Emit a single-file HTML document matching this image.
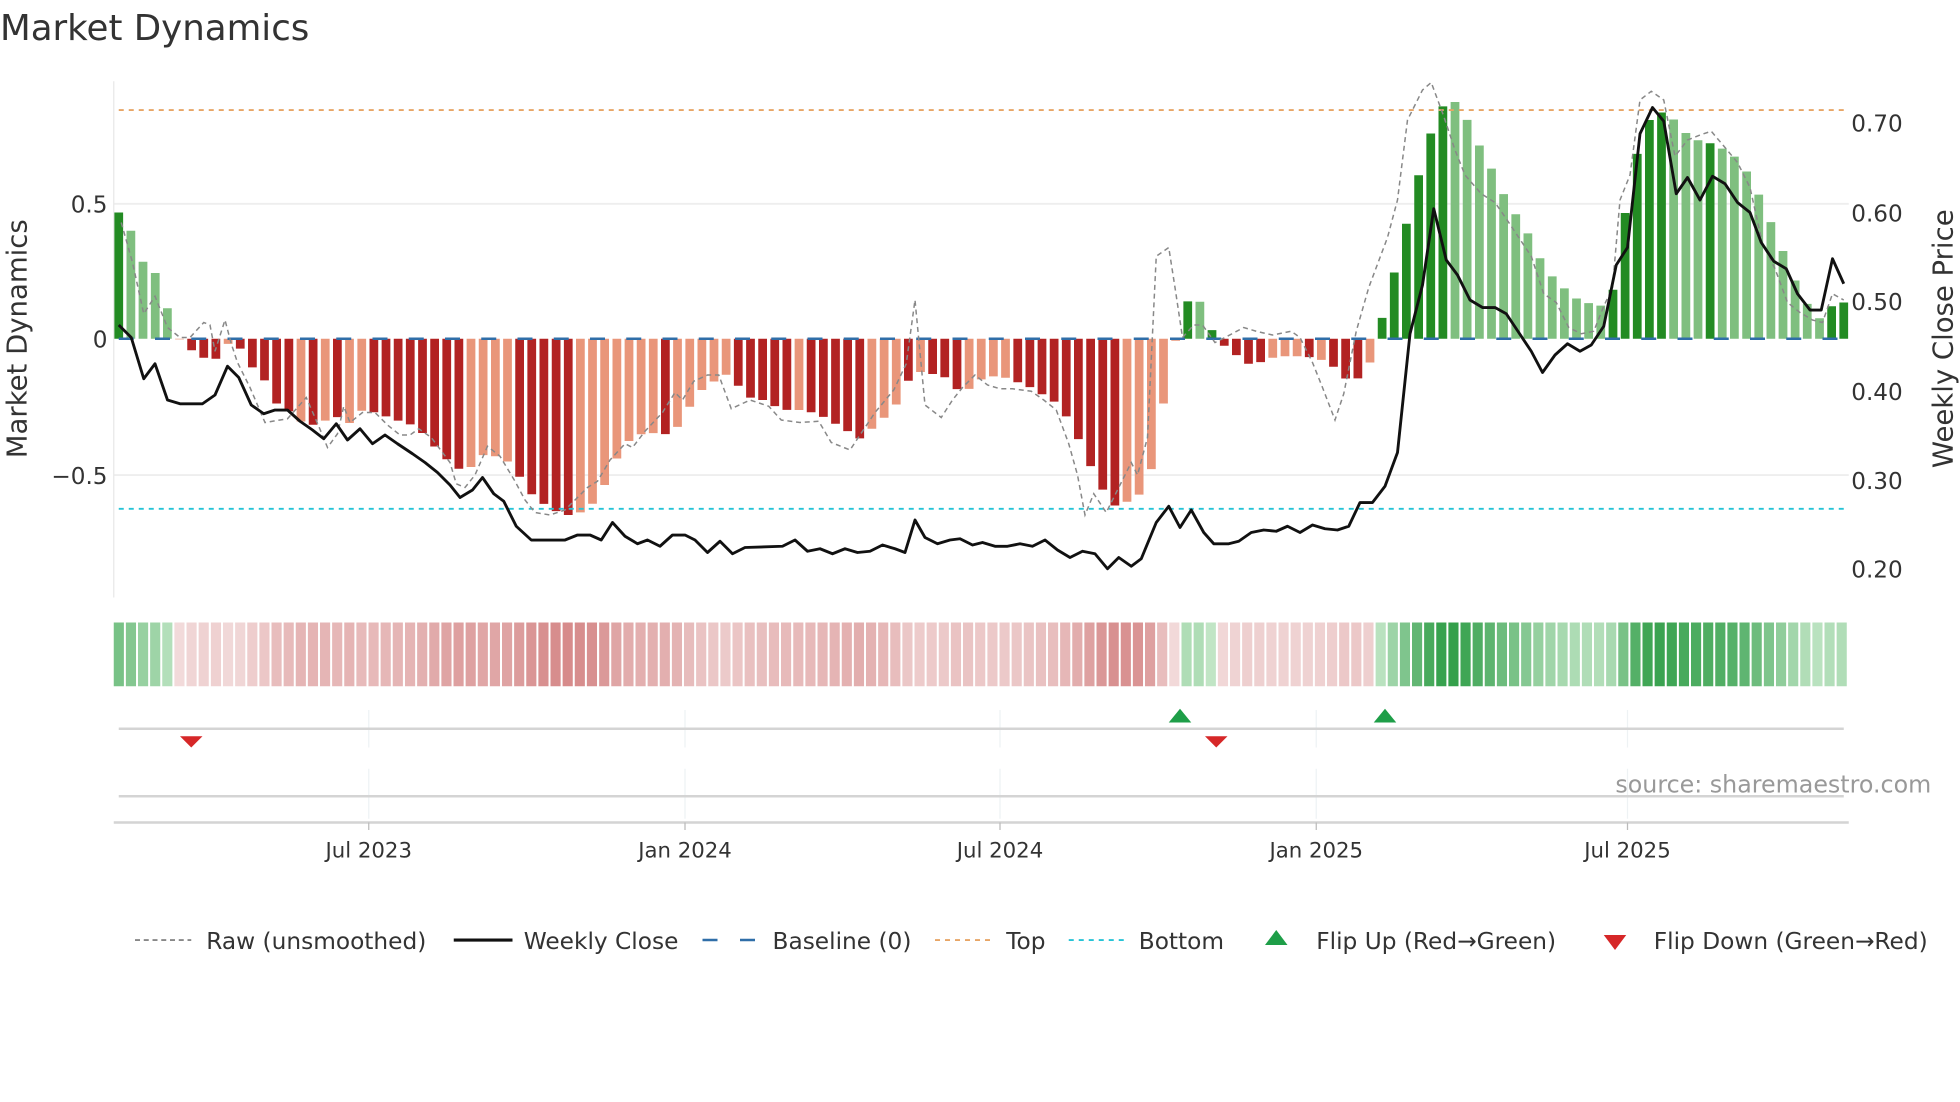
<!DOCTYPE html>
<html><head><meta charset="utf-8"><style>
html,body{margin:0;padding:0;background:#fff;width:1960px;height:1102px;overflow:hidden}
svg{display:block;font-family:"DejaVu Sans","Liberation Sans",sans-serif}
</style></head><body>
<svg id="s" width="1960" height="1102" viewBox="0 0 1568 881.6" xmlns="http://www.w3.org/2000/svg">
<rect width="1568" height="882" fill="#fff"/>
<text x="0" y="32" font-size="28.5" fill="#333">Market Dynamics</text>
<line x1="91" y1="163" x2="1479" y2="163" stroke="#eee" stroke-width="1.5"/>
<line x1="91" y1="380" x2="1479" y2="380" stroke="#eee" stroke-width="1.5"/>
<line x1="91" y1="65" x2="91" y2="478" stroke="#e8e8e8" stroke-width="1"/>
<g id="bars"></g>
<line x1="95" y1="271" x2="1475" y2="271" stroke="#2f6ea8" stroke-width="2" stroke-dasharray="12,17"/>
<line x1="95" y1="88" x2="1475" y2="88" stroke="#e8a565" stroke-width="1.5" stroke-dasharray="4,4"/>
<line x1="95" y1="407" x2="1475" y2="407" stroke="#26c3d6" stroke-width="1.5" stroke-dasharray="4,4"/>
<path id="raw" fill="none" stroke="#888" stroke-width="1.2" stroke-dasharray="4,3"/>
<path id="price" fill="none" stroke="#111" stroke-width="2.3" stroke-linejoin="round"/>
<g font-size="18.5" fill="#333">
<text x="86" y="170" text-anchor="end">0.5</text>
<text x="86" y="278" text-anchor="end">0</text>
<text x="86" y="387" text-anchor="end">−0.5</text>
<text x="1481" y="105">0.70</text>
<text x="1481" y="177">0.60</text>
<text x="1481" y="248">0.50</text>
<text x="1481" y="320">0.40</text>
<text x="1481" y="391">0.30</text>
<text x="1481" y="462">0.20</text>
</g>
<text transform="translate(21,271) rotate(-90)" font-size="22" fill="#333" text-anchor="middle">Market Dynamics</text>
<text transform="translate(1562,271) rotate(-90)" font-size="22" fill="#333" text-anchor="middle">Weekly Close Price</text>
<g id="heat"></g>
<g stroke="#eef2f4" stroke-width="1">
<line x1="295" y1="568" x2="295" y2="598"/><line x1="548" y1="568" x2="548" y2="598"/><line x1="800" y1="568" x2="800" y2="598"/><line x1="1053" y1="568" x2="1053" y2="598"/><line x1="1302" y1="568" x2="1302" y2="598"/>
<line x1="295" y1="615" x2="295" y2="655"/><line x1="548" y1="615" x2="548" y2="655"/><line x1="800" y1="615" x2="800" y2="655"/><line x1="1053" y1="615" x2="1053" y2="655"/><line x1="1302" y1="615" x2="1302" y2="655"/>
</g>
<line x1="95" y1="583" x2="1475" y2="583" stroke="#d4d4d4" stroke-width="2"/>
<line x1="95" y1="637" x2="1475" y2="637" stroke="#d4d4d4" stroke-width="2"/>
<line x1="91" y1="658" x2="1479" y2="658" stroke="#d4d4d4" stroke-width="2"/>
<g stroke="#bbb"><line x1="295" y1="658" x2="295" y2="664"/><line x1="548" y1="658" x2="548" y2="664"/><line x1="800" y1="658" x2="800" y2="664"/><line x1="1053" y1="658" x2="1053" y2="664"/><line x1="1302" y1="658" x2="1302" y2="664"/></g>
<polygon points="944,567 935,578 953,578" fill="#1e9e48"/>
<polygon points="1108,567 1099,578 1117,578" fill="#1e9e48"/>
<polygon points="153,598 144,589 162,589" fill="#d62728"/>
<polygon points="973,598 964,589 982,589" fill="#d62728"/>
<text x="1545" y="634" font-size="19" fill="#999" text-anchor="end">source: sharemaestro.com</text>
<g font-size="17" fill="#333" text-anchor="middle">
<text x="295" y="686">Jul 2023</text><text x="548" y="686">Jan 2024</text><text x="800" y="686">Jul 2024</text><text x="1053" y="686">Jan 2025</text><text x="1302" y="686">Jul 2025</text>
</g>
<g font-size="18.6" fill="#333">
<line x1="108" y1="752" x2="153" y2="752" stroke="#888" stroke-width="1.5" stroke-dasharray="4,3"/>
<text x="165" y="759">Raw (unsmoothed)</text>
<line x1="363" y1="752" x2="410" y2="752" stroke="#111" stroke-width="2.5"/>
<text x="419" y="759">Weekly Close</text>
<line x1="562" y1="752" x2="606" y2="752" stroke="#2f6ea8" stroke-width="2" stroke-dasharray="12,18"/>
<text x="618" y="759">Baseline (0)</text>
<line x1="748" y1="752" x2="792" y2="752" stroke="#e8a565" stroke-width="1.5" stroke-dasharray="4,4"/>
<text x="805" y="759">Top</text>
<line x1="855" y1="752" x2="899" y2="752" stroke="#26c3d6" stroke-width="1.5" stroke-dasharray="4,4"/>
<text x="911" y="759">Bottom</text>
<polygon points="1021,744 1012,756 1030,756" fill="#1e9e48"/>
<text x="1053" y="759">Flip Up (Red→Green)</text>
<polygon points="1292,760 1283,748 1301,748" fill="#d62728"/>
<text x="1323" y="759">Flip Down (Green→Red)</text>
</g>
</svg>
<script>
(function(){
var NS='http://www.w3.org/2000/svg';
function el(parent,tag,attrs){var e=document.createElementNS(NS,tag);for(var k in attrs)e.setAttribute(k,attrs[k]);parent.appendChild(e);return e;}
var K=[[95,170,'D'],[105,185,'L'],[114,209,'L'],[124,218,'L'],[134,247,'L'],[143,271,'L'],[153,280,'D'],[162,286,'D'],[172,288,'D'],[182,275,'L'],[191,277,'D'],[201,293,'D'],[211,303,'D'],[220,322,'D'],[230,328,'D'],[240,337,'L'],[250,340,'D'],[259,337,'L'],[269,333,'D'],[278,340,'L'],[290,328,'L'],[300,330,'D'],[320,337,'D'],[330,340,'D'],[340,348,'D'],[350,360,'D'],[360,370,'D'],[370,377,'D'],[380,372,'L'],[390,360,'L'],[400,368,'L'],[410,370,'L'],[420,390,'D'],[430,400,'D'],[440,406,'D'],[450,412,'D'],[460,412,'L'],[470,407,'L'],[480,397,'L'],[490,373,'L'],[500,355,'L'],[510,348,'L'],[520,346,'L'],[530,348,'D'],[540,345,'L'],[550,328,'L'],[560,313,'L'],[570,306,'L'],[580,299,'L'],[590,308,'D'],[600,318,'D'],[610,320,'D'],[620,325,'D'],[630,328,'D'],[640,328,'L'],[650,330,'D'],[660,334,'D'],[670,340,'D'],[680,346,'D'],[690,352,'D'],[700,340,'L'],[710,332,'L'],[720,320,'L'],[730,297,'D'],[740,298,'L'],[750,300,'D'],[760,303,'D'],[770,318,'D'],[780,305,'L'],[790,302,'L'],[800,300,'L'],[810,305,'D'],[820,307,'D'],[830,314,'D'],[840,318,'D'],[850,328,'D'],[860,345,'D'],[870,368,'D'],[880,388,'D'],[890,405,'D'],[900,402,'L'],[910,398,'L'],[920,381,'L'],[930,327,'L'],[938,284,'L'],[945,252,'D'],[955,231,'D'],[964,250,'L'],[974,275,'D'],[984,278,'D'],[994,290,'D'],[1004,292,'D'],[1014,287,'L'],[1024,285,'L'],[1034,285,'L'],[1044,285,'D'],[1054,287,'L'],[1064,290,'D'],[1074,302,'D'],[1084,305,'D'],[1094,295,'L'],[1100,280,'L'],[1108,244,'D'],[1118,209,'D'],[1128,167,'D'],[1138,128,'D'],[1147,99,'D'],[1157,80,'D'],[1166,82,'L'],[1176,100,'L'],[1186,122,'L'],[1196,140,'L'],[1205,160,'L'],[1215,175,'L'],[1225,191,'L'],[1234,211,'L'],[1244,224,'L'],[1254,233,'L'],[1264,241,'L'],[1273,243,'L'],[1283,245,'L'],[1293,227,'D'],[1302,155,'D'],[1312,114,'D'],[1322,90,'D'],[1331,90,'D'],[1341,97,'L'],[1350,108,'L'],[1360,113,'L'],[1370,115,'D'],[1380,120,'L'],[1390,127,'L'],[1400,141,'L'],[1409,160,'L'],[1419,183,'L'],[1429,207,'L'],[1438,229,'L'],[1448,247,'L'],[1457,256,'L'],[1466,244,'D'],[1475,242,'D']];
function interp(x){for(var j=0;j<K.length-1;j++){if(x<=K[j+1][0]){var a=K[j],b=K[j+1],t=(x-a[0])/(b[0]-a[0]);return [a[1]+(b[1]-a[1])*t,(t<0.5?a:b)[2]];}}return [K[K.length-1][1],K[K.length-1][2]];}
function mix(c1,c2,t){var r=[];for(var i=0;i<3;i++)r.push(Math.round(c1[i]+(c2[i]-c1[i])*t));return 'rgb('+r.join(',')+')';}
var gb=document.getElementById('bars'),gh=document.getElementById('heat');
var N=143,step=(1475-95)/(N-1);
for(var i=0;i<N;i++){var x=95+i*step,v=interp(x),y=v[0],c=v[1];
 var pos=y<271,col;
 if(pos)col=c=='D'?'#238b23':'#7fbf7f';else col=c=='D'?'#b22222':'#e9967a';
 var yt=Math.min(y,271),h=Math.abs(y-271);
 if(h>0.5)el(gb,'rect',{x:(x-3.5).toFixed(1),y:yt.toFixed(1),width:7,height:h.toFixed(1),fill:col});
 var m=Math.min(1,h/190),hc;
 if(pos)hc=mix([198,232,202],[52,160,75],m);else hc=mix([242,218,218],[205,112,112],m);
 var hx=91+i*(1388/N);
 el(gh,'rect',{x:hx.toFixed(1),y:498,width:(1388/N-1.6).toFixed(2),height:51,fill:hc});}
var P=[95,260,105,270,115,303,124,291,134,320,144,323,162,323,172,316,182,293,191,302,201,324,211,331,220,328,230,328,240,337,250,344,259,351,269,339,278,352,288,343,298,355,308,348,318,355,330,363,340,370,350,378,360,388,368,398,378,392,386,382,395,395,403,401,413,421,425,432,452,432,462,428,472,428,481,432,490,418,500,429,510,435,518,432,528,437,538,428,548,428,556,432,566,442,576,433,586,443,596,438,626,437,636,432,646,441,656,439,666,443,676,439,686,442,696,441,706,436,716,439,724,442,732,416,740,430,750,435,760,432,768,431,778,436,786,434,796,437,806,437,816,435,826,437,836,432,846,440,856,446,866,441,876,443,886,455,895,446,905,453,913,447,925,418,935,405,944,422,953,408,963,426,971,435,983,435,991,433,1001,426,1011,424,1021,425,1030,421,1040,426,1050,420,1060,423,1070,424,1079,421,1088,402,1098,402,1108,389,1118,362,1128,267,1138,228,1147,167,1157,208,1166,220,1176,240,1186,246,1196,246,1205,251,1215,266,1225,281,1234,298,1244,284,1254,275,1264,281,1273,276,1283,261,1293,212,1302,198,1312,107,1322,86,1331,97,1341,155,1350,142,1360,160,1370,141,1380,147,1390,162,1400,170,1409,194,1419,209,1429,215,1438,235,1448,248,1457,248,1466,207,1475,227];
var R=[97,178,106,210,115,251,124,237,134,262,144,270,152,270,163,258,168,260,172,281,180,256,185,275,190,290,200,310,212,338,230,335,245,318,255,341,262,358,270,347,275,325,280,338,290,330,300,330,310,340,320,348,328,348,335,343,345,350,360,370,365,387,372,390,380,380,390,357,400,365,412,385,420,400,428,410,440,412,452,408,460,400,470,390,478,385,488,368,500,355,506,358,516,345,530,330,540,314,546,320,555,305,566,300,575,300,585,327,600,320,615,325,625,336,640,338,655,337,665,354,680,360,690,345,700,330,715,312,725,291,732,240,740,324,753,334,762,320,770,310,780,300,790,308,800,311,810,311,825,313,835,320,845,328,855,355,862,380,868,412,875,395,885,410,895,390,905,370,910,380,918,350,925,205,935,198,940,230,946,270,955,260,962,260,972,274,980,270,995,262,1005,265,1018,268,1033,265,1040,270,1050,290,1058,310,1068,336,1075,315,1085,265,1095,230,1110,190,1118,160,1126,96,1138,72,1145,66,1155,93,1164,120,1172,140,1185,155,1196,162,1205,175,1215,190,1225,205,1235,235,1245,242,1255,262,1265,267,1275,265,1283,245,1290,230,1296,160,1304,140,1312,80,1321,73,1331,80,1340,125,1350,112,1360,108,1369,105,1380,118,1390,130,1400,150,1410,195,1420,215,1430,242,1440,250,1450,256,1458,258,1466,235,1475,240];
function pd(a){var s='M'+a[0]+','+a[1];for(var i=2;i<a.length;i+=2)s+=' L'+a[i]+','+a[i+1];return s;}
document.getElementById('price').setAttribute('d',pd(P));document.getElementById('raw').setAttribute('d',pd(R));
})();
</script>
</body></html>
